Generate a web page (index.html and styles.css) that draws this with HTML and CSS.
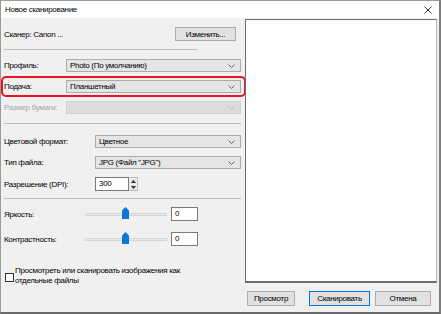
FILE: index.html
```html
<!DOCTYPE html>
<html lang="ru">
<head>
    <meta charset="UTF-8">
    <title>Новое сканирование</title>
    <link rel="stylesheet" href="styles.css">
</head>
<body>

    <div class="window">
        <div class="titlebar">
            <span class="title">Новое сканирование</span>
            <svg class="close" width="8" height="8" viewBox="0 0 8 8">
                <path d="M0.5 0.5 L7.5 7.5 M7.5 0.5 L0.5 7.5" stroke="#333" stroke-width="1" fill="none"/>
            </svg>
        </div>

        <div class="dialog-body">
            <!-- Settings column -->
            <div class="settings">
                <div class="scanner-row">
                    <span>Сканер: Canon ...</span>
                    <button class="btn btn-change">Изменить...</button>
                </div>

                <div class="sep sep-short"></div>

                <div class="field">
                    <label class="label">Профиль:</label>
                    <div class="combo"><span>Photo (По умолчанию)</span><svg class="chevron" width="7" height="4" viewBox="0 0 7 4"><path d="M0.5 0.5 L3.5 3.5 L6.5 0.5" stroke="#666" fill="none"/></svg></div>
                </div>

                <div class="field field-highlight">
                    <label class="label">Подача:</label>
                    <div class="combo"><span>Планшетный</span><svg class="chevron" width="7" height="4" viewBox="0 0 7 4"><path d="M0.5 0.5 L3.5 3.5 L6.5 0.5" stroke="#666" fill="none"/></svg></div>
                </div>

                <div class="field disabled">
                    <label class="label">Размер бумаги:</label>
                    <div class="combo"><span></span><svg class="chevron" width="7" height="4" viewBox="0 0 7 4"><path d="M0.5 0.5 L3.5 3.5 L6.5 0.5" stroke="#b5b5b5" fill="none"/></svg></div>
                </div>

                <div class="sep sep-colour"></div>

                <div class="field field-wide">
                    <label class="label">Цветовой формат:</label>
                    <div class="combo"><span>Цветное</span><svg class="chevron" width="7" height="4" viewBox="0 0 7 4"><path d="M0.5 0.5 L3.5 3.5 L6.5 0.5" stroke="#666" fill="none"/></svg></div>
                </div>

                <div class="field field-wide">
                    <label class="label">Тип файла:</label>
                    <div class="combo"><span>JPG (Файл "JPG")</span><svg class="chevron" width="7" height="4" viewBox="0 0 7 4"><path d="M0.5 0.5 L3.5 3.5 L6.5 0.5" stroke="#666" fill="none"/></svg></div>
                </div>

                <div class="field field-wide field-spin">
                    <label class="label">Разрешение (DPI):</label>
                    <div class="spin">
                        <div class="spin-input">300</div>
                        <div class="spin-buttons">
                            <div class="spin-btn"><svg width="5" height="3" viewBox="0 0 5 3"><path d="M2.5 0 L5 3 L0 3 Z" fill="#333"/></svg></div>
                            <div class="spin-btn"><svg width="5" height="3" viewBox="0 0 5 3"><path d="M0 0 L5 0 L2.5 3 Z" fill="#333"/></svg></div>
                        </div>
                    </div>
                </div>

                <div class="sep sep-sliders"></div>

                <div class="slider-row">
                    <label class="label slider-label">Яркость:</label>
                    <div class="slider">
                        <div class="track"></div>
                        <svg class="thumb" width="7" height="12" viewBox="0 0 7 12"><path d="M0 3.5 L3.5 0 L7 3.5 L7 12 L0 12 Z" fill="#0a78d7"/></svg>
                    </div>
                    <div class="value-box">0</div>
                </div>

                <div class="slider-row slider-row-second">
                    <label class="label slider-label">Контрастность:</label>
                    <div class="slider">
                        <div class="track"></div>
                        <svg class="thumb" width="7" height="12" viewBox="0 0 7 12"><path d="M0 3.5 L3.5 0 L7 3.5 L7 12 L0 12 Z" fill="#0a78d7"/></svg>
                    </div>
                    <div class="value-box">0</div>
                </div>

                <div class="check-row">
                    <div class="checkbox"></div>
                    <span class="check-text">Просмотреть или сканировать изображения как отдельные файлы</span>
                </div>
            </div>

            <!-- Preview column -->
            <div class="preview-col">
                <div class="preview"></div>
                <div class="actions">
                    <button class="btn btn-preview">Просмотр</button>
                    <button class="btn btn-scan">Сканировать</button>
                    <button class="btn btn-cancel">Отмена</button>
                </div>
            </div>
        </div>
    </div>

</body>
</html>
```

FILE: styles.css
```css
/* Page */
body {
    margin: 0;
    font-family: 'Liberation Sans', Arial, sans-serif;
    font-size: 8px;
    letter-spacing: -0.3px;
    color: #000;
    background: #fff;
}

/* Window frame */
.window {
    box-sizing: border-box;
    width: 441px;
    height: 314px;
    border: 1px solid #9a9a9a;
    border-right: 2px solid #7c7c7c;
    border-bottom: 2px solid #6a6a6a;
    background-color: #f0f0f0;
    display: flex;
    flex-direction: column;
}

.titlebar {
    height: 17px;
    background-color: #fff;
    display: flex;
    align-items: center;
    padding: 0 5px 0 4px;
}

.title {
    flex: 1;
}

.close {
    margin-right: 2px;
}

.dialog-body {
    display: flex;
    flex: 1;
}

/* Settings column */
.settings {
    width: 237px;
    padding: 9px 3px 0 3px;
    display: flex;
    flex-direction: column;
}

.scanner-row {
    display: flex;
    align-items: center;
    height: 14px;
}

.btn {
    font-family: inherit;
    font-size: 8px;
    letter-spacing: -0.3px;
    color: #000;
    background-color: #e1e1e1;
    border: 1px solid #adadad;
    padding: 0;
    height: 15px;
    box-sizing: border-box;
}

.btn-change {
    margin-left: auto;
    margin-right: 5px;
    width: 61px;
    height: 14px;
}

/* Separators */
.sep {
    height: 0;
    border-top: 1px solid #bdbdbd;
}

.sep-short {
    width: 193px;
    margin-top: 8px;
}

.sep-colour {
    margin-top: 9px;
}

.sep-sliders {
    margin-top: 7px;
}

/* Form fields */
.field {
    display: flex;
    align-items: center;
    height: 13px;
    margin-top: 8px;
}

.sep-short + .field {
    margin-top: 9px;
}

.sep-colour + .field {
    margin-top: 11px;
}

.label {
    width: 62px;
    flex-shrink: 0;
    white-space: nowrap;
}

.field-wide .label {
    width: 91px;
}

.combo {
    flex: 1;
    height: 13px;
    box-sizing: border-box;
    background-color: #e5e5e5;
    border: 1px solid #acacac;
    display: flex;
    align-items: center;
    padding: 0 5px 0 3px;
}

.combo span {
    flex: 1;
}

.field-highlight {
    margin: 4px -5px -4px -3px;
    padding: 2px 3px 2px 1px;
    border: 2px solid #e8141e;
    border-radius: 5px;
}

.disabled .label {
    color: #a5a5a5;
}

.disabled .combo {
    background-color: #dcdcdc;
    border-color: #d0d0d0;
}

/* Spin box */
.field-spin {
    height: 14px;
}

.spin {
    display: flex;
    height: 14px;
}

.spin-input {
    width: 34px;
    box-sizing: border-box;
    background-color: #fff;
    border: 1px solid #7a7a7a;
    padding-left: 3px;
    line-height: 12px;
}

.spin-buttons {
    width: 9px;
    box-sizing: border-box;
    border: 1px solid #bcbcbc;
    border-left: none;
    background-color: #f0f0f0;
    display: flex;
    flex-direction: column;
}

.spin-btn {
    flex: 1;
    display: flex;
    align-items: center;
    justify-content: center;
    background-color: #e3e3e3;
    margin: 1px 1px 0 1px;
}

.spin-btn svg {
    display: block;
}

/* Sliders */
.slider-row {
    display: flex;
    align-items: center;
    height: 14px;
    margin-top: 8px;
}

.slider-row-second {
    margin-top: 11px;
}

.slider-label {
    width: 81px;
}

.slider {
    position: relative;
    width: 82px;
    height: 14px;
    display: flex;
    align-items: center;
}

.track {
    width: 100%;
    height: 3px;
    background-color: #e7eaea;
    border: 1px solid #d6d6d6;
    box-sizing: border-box;
}

.thumb {
    position: absolute;
    left: 37px;
    top: 0;
}

.value-box {
    width: 27px;
    height: 14px;
    box-sizing: border-box;
    margin-left: 4px;
    background-color: #fff;
    border: 1px solid #7a7a7a;
    padding-left: 3px;
    line-height: 12px;
}

/* Checkbox */
.check-row {
    display: flex;
    align-items: flex-start;
    margin-top: 20px;
    margin-left: 1px;
}

.checkbox {
    width: 9px;
    height: 9px;
    box-sizing: border-box;
    border: 1px solid #333;
    background-color: #fff;
    margin-top: 7px;
    flex-shrink: 0;
}

.check-text {
    width: 172px;
    line-height: 10px;
    margin-left: 1px;
}

/* Preview column */
.preview-col {
    width: 192px;
    margin-left: 1px;
    display: flex;
    flex-direction: column;
}

.preview {
    height: 264px;
    margin-top: 1px;
    box-sizing: border-box;
    background-color: #fff;
    border: 1px solid #6d6d6d;
    border-right-color: #b4b4b4;
    border-bottom-width: 2px;
}

.actions {
    display: flex;
    margin-top: 8px;
    padding-left: 2px;
}

.btn-preview {
    width: 48px;
}

.btn-scan {
    width: 61px;
    margin-left: 14px;
    border-color: #0078d7;
}

.btn-cancel {
    width: 56px;
    margin-left: 5px;
}
```
